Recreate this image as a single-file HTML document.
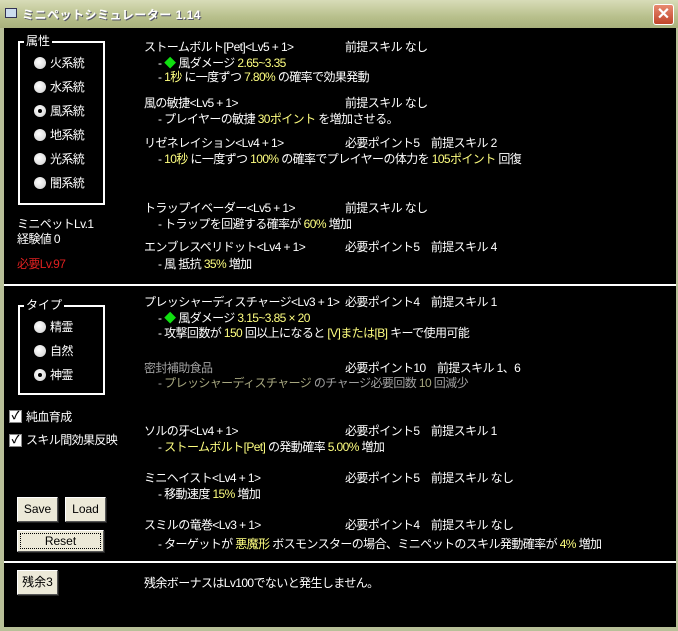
<!DOCTYPE html>
<html><head><meta charset="utf-8"><style>
*{margin:0;padding:0;box-sizing:border-box}
body{width:678px;height:631px;background:#b8c098;position:relative;overflow:hidden;font-family:"Liberation Sans","Noto Sans CJK JP",sans-serif;font-size:12px;color:#fff}
#title{position:absolute;left:0;top:0;width:678px;height:28px;background:linear-gradient(#d8dcb8,#b8c08c 60%,#a8b07c);}
#title span{position:absolute;left:22px;top:6px;font-size:12px;font-weight:bold;color:#fff;text-shadow:1px 1px 0 #556;letter-spacing:0.5px}
#ico{position:absolute;left:5px;top:8px;width:12px;height:10px;border:1px solid #335;background:#cde}
#close{position:absolute;left:653px;top:4px;width:21px;height:21px;border-radius:3px;background:linear-gradient(#e88a70,#c0442a);border:1px solid #fff;color:#fff;font-size:16px;line-height:19px;text-align:center;font-weight:bold}
#main{position:absolute;left:4px;top:28px;width:672px;height:599px;background:#000}
.t{position:absolute;white-space:nowrap;line-height:14px;letter-spacing:-0.6px}
.y{color:#ffff80}.g{color:#a0a0a0}.gy{color:#a8a880}.r{color:#e02020}
.d{color:#10e010}
.hl{position:absolute;left:4px;width:672px;height:2px;background:#fff}
.grp{position:absolute;border:2px solid #fff;border-style:solid}
.grp b{position:absolute;top:-9px;left:4px;background:#000;font-weight:normal;padding:0 2px;line-height:14px}
.rad{position:absolute;width:12px;height:12px;border-radius:50%;background:radial-gradient(circle at 40% 40%,#fff,#ccc)}
.rad.on::after{content:"";position:absolute;left:4px;top:4px;width:4px;height:4px;border-radius:50%;background:#000}
.cb{position:absolute;width:13px;height:13px;background:#fff;border:1px solid #888;color:#000;font-size:11px;line-height:11px;text-align:center;font-weight:bold}
.btn{position:absolute;background:#ece9d8;border:1px solid #fff;border-right-color:#555;border-bottom-color:#555;box-shadow:1px 1px 0 #222;color:#000;text-align:center}
</style></head><body>
<div id="title"><div id="ico"></div><span>ミニペットシミュレーター 1.14</span><div id="close">✕</div></div>
<div id="main"></div>
<div class="hl" style="top:284px"></div>
<div class="hl" style="top:561px"></div>

<div class="grp" style="left:18px;top:41px;width:87px;height:164px"><b>属性</b></div>
<div class="rad" style="left:34px;top:57px"></div><div class="t" style="left:50px;top:56px">火系統</div>
<div class="rad" style="left:34px;top:81px"></div><div class="t" style="left:50px;top:80px">水系統</div>
<div class="rad on" style="left:34px;top:105px"></div><div class="t" style="left:50px;top:104px">風系統</div>
<div class="rad" style="left:34px;top:129px"></div><div class="t" style="left:50px;top:128px">地系統</div>
<div class="rad" style="left:34px;top:153px"></div><div class="t" style="left:50px;top:152px">光系統</div>
<div class="rad" style="left:34px;top:177px"></div><div class="t" style="left:50px;top:176px">闇系統</div>
<div class="t" style="left:17px;top:217px">ミニペットLv.1</div>
<div class="t" style="left:17px;top:232px">経験値 0</div>
<div class="t r" style="left:17px;top:257px">必要Lv.97</div>

<div class="grp" style="left:18px;top:305px;width:87px;height:90px"><b>タイプ</b></div>
<div class="rad" style="left:34px;top:321px"></div><div class="t" style="left:50px;top:320px">精霊</div>
<div class="rad" style="left:34px;top:345px"></div><div class="t" style="left:50px;top:344px">自然</div>
<div class="rad on" style="left:34px;top:369px"></div><div class="t" style="left:50px;top:368px">神霊</div>
<div class="cb" style="left:9px;top:410px">✓</div><div class="t" style="left:26px;top:410px">純血育成</div>
<div class="cb" style="left:9px;top:434px">✓</div><div class="t" style="left:26px;top:433px">スキル間効果反映</div>

<div class="btn" style="left:17px;top:497px;width:41px;height:25px;line-height:23px">Save</div>
<div class="btn" style="left:65px;top:497px;width:41px;height:25px;line-height:23px">Load</div>
<div class="btn" style="left:17px;top:530px;width:87px;height:22px;line-height:20px;outline:1px dotted #000;outline-offset:-4px">Reset</div>
<div class="btn" style="left:17px;top:570px;width:41px;height:25px;line-height:23px">残余3</div>

<div class="t" style="left:144px;top:40px">ストームボルト[Pet]&lt;Lv5 + 1&gt;</div><div class="t" style="left:345px;top:40px">前提スキル なし</div>
<div class="t" style="left:158px;top:56px">- <span class="d">◆</span> 風ダメージ <span class="y">2.65~3.35</span></div>
<div class="t" style="left:158px;top:70px">- <span class="y">1秒</span> に一度ずつ <span class="y">7.80%</span> の確率で効果発動</div>
<div class="t" style="left:144px;top:96px">風の敏捷&lt;Lv5 + 1&gt;</div><div class="t" style="left:345px;top:96px">前提スキル なし</div>
<div class="t" style="left:158px;top:112px">- プレイヤーの敏捷 <span class="y">30ポイント</span> を増加させる。</div>
<div class="t" style="left:144px;top:136px">リゼネレイション&lt;Lv4 + 1&gt;</div><div class="t" style="left:345px;top:136px">必要ポイント5　前提スキル 2</div>
<div class="t" style="left:158px;top:152px">- <span class="y">10秒</span> に一度ずつ <span class="y">100%</span> の確率でプレイヤーの体力を <span class="y">105ポイント</span> 回復</div>
<div class="t" style="left:144px;top:201px">トラップイベーダー&lt;Lv5 + 1&gt;</div><div class="t" style="left:345px;top:201px">前提スキル なし</div>
<div class="t" style="left:158px;top:217px">- トラップを回避する確率が <span class="y">60%</span> 増加</div>
<div class="t" style="left:144px;top:240px">エンブレスペリドット&lt;Lv4 + 1&gt;</div><div class="t" style="left:345px;top:240px">必要ポイント5　前提スキル 4</div>
<div class="t" style="left:158px;top:257px">- 風 抵抗 <span class="y">35%</span> 増加</div>

<div class="t" style="left:144px;top:295px">プレッシャーディスチャージ&lt;Lv3 + 1&gt;</div><div class="t" style="left:345px;top:295px">必要ポイント4　前提スキル 1</div>
<div class="t" style="left:158px;top:311px">- <span class="d">◆</span> 風ダメージ <span class="y">3.15~3.85 × 20</span></div>
<div class="t" style="left:158px;top:326px">- 攻撃回数が <span class="y">150</span> 回以上になると <span class="y">[V]または[B]</span> キーで使用可能</div>
<div class="t g" style="left:144px;top:361px">密封補助食品</div><div class="t" style="left:345px;top:361px">必要ポイント10　前提スキル 1、6</div>
<div class="t g" style="left:158px;top:376px">- <span class="gy">プレッシャーディスチャージ</span> のチャージ必要回数 <span class="gy">10</span> 回減少</div>
<div class="t" style="left:144px;top:424px">ソルの牙&lt;Lv4 + 1&gt;</div><div class="t" style="left:345px;top:424px">必要ポイント5　前提スキル 1</div>
<div class="t" style="left:158px;top:440px">- <span class="y">ストームボルト[Pet]</span> の発動確率 <span class="y">5.00%</span> 増加</div>
<div class="t" style="left:144px;top:471px">ミニヘイスト&lt;Lv4 + 1&gt;</div><div class="t" style="left:345px;top:471px">必要ポイント5　前提スキル なし</div>
<div class="t" style="left:158px;top:487px">- 移動速度 <span class="y">15%</span> 増加</div>
<div class="t" style="left:144px;top:518px">スミルの竜巻&lt;Lv3 + 1&gt;</div><div class="t" style="left:345px;top:518px">必要ポイント4　前提スキル なし</div>
<div class="t" style="left:158px;top:537px">- ターゲットが <span class="y">悪魔形</span> ボスモンスターの場合、ミニペットのスキル発動確率が <span class="y">4%</span> 増加</div>
<div class="t" style="left:144px;top:576px">残余ボーナスはLv100でないと発生しません。</div>
</body></html>
